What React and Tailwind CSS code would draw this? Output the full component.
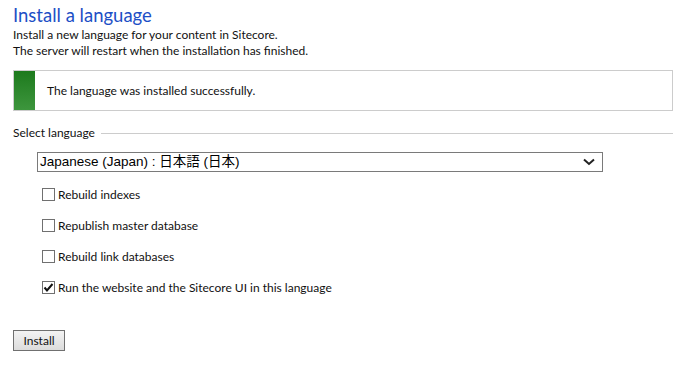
import React from 'react';

const options = [
    { label: 'Rebuild indexes', checked: false },
    { label: 'Republish master database', checked: false },
    { label: 'Rebuild link databases', checked: false },
    { label: 'Run the website and the Sitecore UI in this language', checked: true },
];

const Box = ({ checked }) => (
    <span className="relative w-[13px] h-[13px] border border-[#707070] bg-white shrink-0">
        {checked && (
            <svg viewBox="0 0 13 13" className="absolute -left-px -top-px w-[13px] h-[13px]">
                <path d="M2.5 6.5 L5 9.5 L10.5 3" fill="none" stroke="#111" strokeWidth="2" />
            </svg>
        )}
    </span>
);

export default function App() {
    return (
        <div className="w-[690px] h-[371px] bg-white px-[13px] pt-[4px] text-[12px] text-[#111]" style={{ fontFamily: '"Segoe UI", Lato, sans-serif' }}>
            <h1 className="text-[18.5px] leading-[22px] text-[#1d4fc6]">Install a language</h1>
            <p className="leading-[16px] mt-[1px]">
                Install a new language for your content in Sitecore.<br />
                The server will restart when the installation has finished.
            </p>

            {/* Status message */}
            <div className="mt-[11px] w-[660px] h-[41px] border border-[#cccccc] flex items-center">
                <div className="w-[21px] h-full bg-gradient-to-b from-[#1c7a1c] to-[#3d963d]" />
                <span className="ml-[12px]">The language was installed successfully.</span>
            </div>

            {/* Select language group */}
            <div className="mt-[14px] w-[660px] flex items-center gap-[6px] leading-[16px]">
                <span>Select language</span>
                <div className="flex-1 h-px bg-[#cccccc]" />
            </div>

            <div className="ml-[24px] mt-[11px] w-[566px] h-[20px] border border-[#7a7a7a] flex items-center justify-between pl-[2px] pr-[7px] text-[13.5px] text-black" style={{ fontFamily: '"Liberation Sans", "Noto Sans CJK JP", sans-serif' }}>
                <span>Japanese (Japan) : 日本語 (日本)</span>
                <svg viewBox="0 0 12 8" className="w-[12px] h-[8px]">
                    <path d="M1 1.5 L6 6 L11 1.5" fill="none" stroke="#222" strokeWidth="2" />
                </svg>
            </div>

            <div className="ml-[29px] mt-[16px] flex flex-col gap-[18px]">
                {options.map((o) => (
                    <label key={o.label} className="flex items-center gap-[3px] h-[13px] leading-[16px]">
                        <Box checked={o.checked} />
                        <span>{o.label}</span>
                    </label>
                ))}
            </div>

            <button className="mt-[36px] w-[52px] h-[21px] border border-[#707070] bg-gradient-to-b from-[#f3f3f3] to-[#dcdcdc] text-[12px] leading-[19px] text-[#111]">
                Install
            </button>
        </div>
    );
}
